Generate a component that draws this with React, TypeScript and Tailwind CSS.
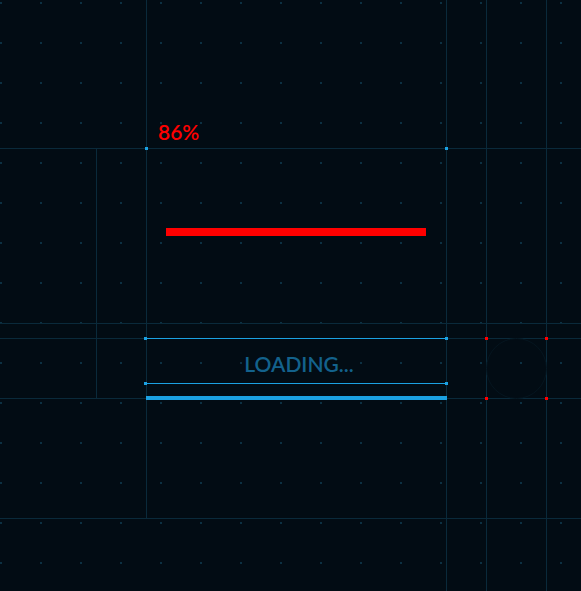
import React from 'react'

// faint blueprint grid behind the loader
function GridBackdrop() {
  const line = '#0a2a3b'
  return (
    <svg
      className="absolute inset-0"
      width={581}
      height={591}
      viewBox="0 0 581 591"
      shapeRendering="crispEdges"
    >
      <defs>
        <pattern id="dots" x="0" y="2" width="40" height="40" patternUnits="userSpaceOnUse">
          <rect x="0" y="0" width="2" height="2" fill="#0c3143" />
        </pattern>
      </defs>
      <rect width="581" height="591" fill="url(#dots)" />

      {/* horizontals */}
      <rect x="0" y="148" width="581" height="1" fill={line} />
      <rect x="0" y="323" width="581" height="1" fill={line} />
      <rect x="0" y="338" width="581" height="1" fill={line} />
      <rect x="0" y="398" width="581" height="1" fill={line} />
      <rect x="0" y="518" width="581" height="1" fill={line} />

      {/* verticals */}
      <rect x="96" y="148" width="1" height="250" fill={line} />
      <rect x="146" y="0" width="1" height="518" fill={line} />
      <rect x="446" y="0" width="1" height="591" fill={line} />
      <rect x="486" y="0" width="1" height="591" fill={line} />
      <rect x="546" y="0" width="1" height="591" fill={line} />

      <circle cx="516.5" cy="368.5" r="30" fill="none" stroke="#05151f" strokeWidth="1" shapeRendering="auto" />

      <rect x="145" y="147" width="3" height="3" fill="#1ba1e2" />
      <rect x="445" y="147" width="3" height="3" fill="#1ba1e2" />

      <rect x="485" y="337" width="3" height="3" fill="#ff0000" />
      <rect x="545" y="337" width="3" height="3" fill="#ff0000" />
      <rect x="485" y="397" width="3" height="3" fill="#ff0000" />
      <rect x="545" y="397" width="3" height="3" fill="#ff0000" />
    </svg>
  )
}

function Corner({ className }: { className: string }) {
  return <span className={`absolute h-[3px] w-[3px] bg-[#1ba1e2] ${className}`} />
}

export default function App() {
  return (
    <div className="relative h-[591px] w-[581px] overflow-hidden bg-[#020c14] font-['Lato','Open_Sans',sans-serif]">
      <GridBackdrop />

      <div className="relative ml-[146px] flex w-[301px] flex-col">
        <div className="flex h-[148px] items-end pb-[6px] pl-[12px]">
          <span className="text-[21px] font-semibold leading-none text-[#ff0000]">86%</span>
        </div>

        <div className="ml-[20px] mt-[80px] h-[8px] w-[260px] bg-[#ff0000]" />

        <div className="relative mt-[102px] flex h-[46px] w-[300px] items-center justify-center border-y border-[#1ba1e2]">
          <Corner className="-left-[2px] -top-[2px]" />
          <Corner className="-right-[2px] -top-[2px]" />
          <Corner className="-bottom-[2px] -left-[2px]" />
          <Corner className="-bottom-[2px] -right-[2px]" />
          <span className="pl-[6px] pt-[5px] text-[21px] font-semibold leading-none text-[#13628c]">
            LOADING...
          </span>
        </div>

        <div className="mt-[12px] h-[4px] w-[301px] bg-[#1ba1e2]" />
      </div>
    </div>
  )
}
